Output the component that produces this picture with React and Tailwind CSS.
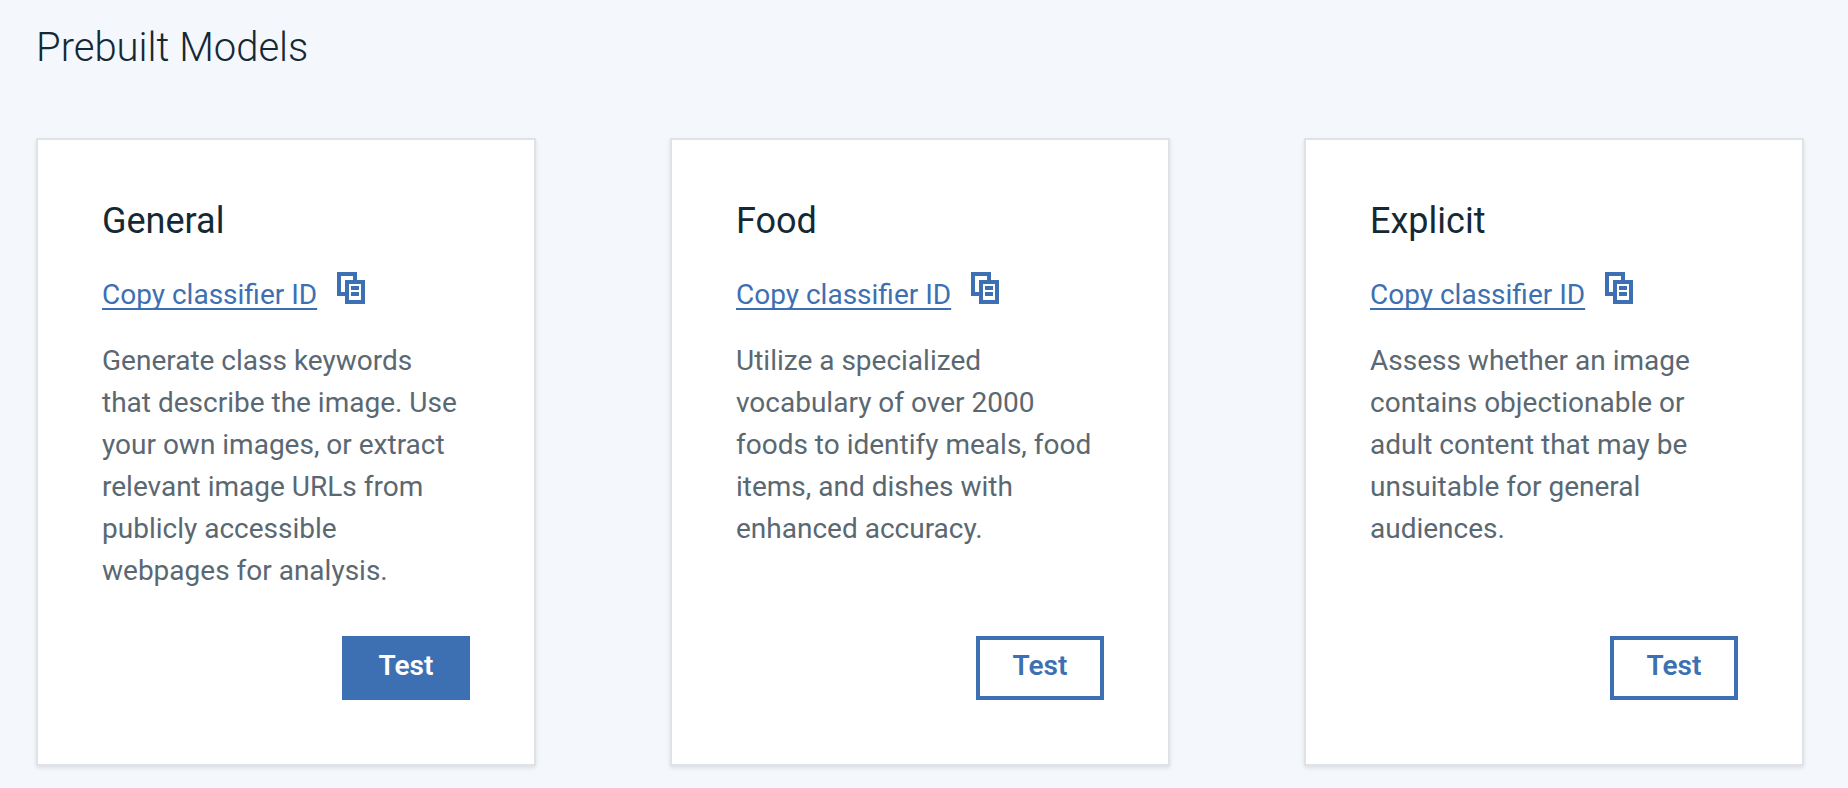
const models = [
  {
    name: 'General',
    description:
      'Generate class keywords that describe the image. Use your own images, or extract relevant image URLs from publicly accessible webpages for analysis.',
    primary: true,
  },
  {
    name: 'Food',
    description:
      'Utilize a specialized vocabulary of over 2000 foods to identify meals, food items, and dishes with enhanced accuracy.',
  },
  {
    name: 'Explicit',
    description:
      'Assess whether an image contains objectionable or adult content that may be unsuitable for general audiences.',
  },
];

function CopyIcon() {
  return (
    <svg width="28" height="32" viewBox="0 0 28 32" fill="currentColor" fillRule="evenodd" shapeRendering="crispEdges" aria-hidden="true">
      <path d="M0 0h20v8h-4V4H4v16h4v4H0z" />
      <path d="M8 8h20v24H8zM12 12v16h12V12z" />
      <path d="M14 14h8v4h-8zM14 20h8v4h-8z" />
    </svg>
  );
}

function ModelCard({ model }) {
  return (
    <article className="flex flex-col border-2 border-[#dfe3e6] bg-white px-16 pt-15 pb-16 shadow-[0_2px_4px_0_rgba(0,0,0,0.1)]">
      <h2 className="text-[36px] leading-[42px] text-[#152935]">{model.name}</h2>
      <div className="mt-[30px] flex items-start gap-5 text-[#3d70b2]">
        <a href="#copy" className="pt-0.5 text-[28px] leading-[42px] underline decoration-2 underline-offset-4 [text-decoration-skip-ink:none]">
          Copy classifier ID
        </a>
        <button type="button" aria-label={`Copy ${model.name} classifier ID`}>
          <CopyIcon />
        </button>
      </div>
      <p className="mt-6 mb-11 pr-2 text-[28px] leading-[42px] text-[#5a6872]">{model.description}</p>
      <button
        type="button"
        className={`mt-auto h-16 w-32 self-end border-4 border-[#3d70b2] pb-1 text-[28px] leading-[42px] font-semibold ${
          model.primary ? 'bg-[#3d70b2] text-white' : 'bg-white text-[#3d70b2]'
        }`}
      >
        Test
      </button>
    </article>
  );
}

export default function App() {
  return (
    <main className="min-h-screen bg-[#f4f7fb] pt-5 pr-11 pb-5 pl-9 font-[Roboto,'Noto_Sans',sans-serif]">
      <h1 className="text-[40px] leading-14 font-light text-[#152935]">Prebuilt Models</h1>
      <section className="mt-[62px] grid grid-cols-3 gap-[134px]">
        {models.map((model) => (
          <ModelCard key={model.name} model={model} />
        ))}
      </section>
    </main>
  );
}
